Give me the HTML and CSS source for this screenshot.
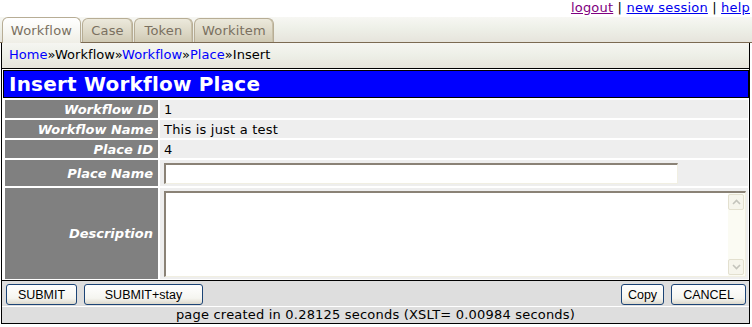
FILE: index.html
```html
<!DOCTYPE html>
<html lang="en">
<head>
	<meta charset="UTF-8">
	<title>Insert Workflow Place</title>
	<link rel="stylesheet" href="styles.css">
</head>
<body>
	<div class="toplinks">
		<a href="#" class="visited">logout</a> | <a href="#">new session</a> | <a href="#">help</a>
	</div>
	<div class="tabbar">
		<ul class="tabs">
			<li class="tab active w1">Workflow</li>
			<li class="tab w2">Case</li>
			<li class="tab w3">Token</li>
			<li class="tab w4">Workitem</li>
		</ul>
	</div>
	<div class="page">
		<div class="crumbs">
			<a href="#">Home</a>»Workflow»<a href="#">Workflow</a>»<a href="#">Place</a>»Insert
		</div>
		<div class="content">
			<h1 class="title">Insert Workflow Place</h1>
			<div class="form-grid">
				<div class="label">Workflow ID</div>
				<div class="value">1</div>
				<div class="label">Workflow Name</div>
				<div class="value">This is just a test</div>
				<div class="label">Place ID</div>
				<div class="value">4</div>
				<div class="label">Place Name</div>
				<div class="value field"><input type="text" class="text-input"></div>
				<div class="label">Description</div>
				<div class="value field">
					<div class="textbox">
						<textarea class="text-area"></textarea>
						<div class="scrollbar">
							<span class="scroll-btn">
								<svg width="9" height="6" viewBox="0 0 9 6"><path d="M1 5 L4.5 1.5 L8 5" fill="none" stroke="#c4c4bc" stroke-width="1.6"/></svg>
							</span>
							<span class="scroll-btn">
								<svg width="9" height="6" viewBox="0 0 9 6"><path d="M1 1 L4.5 4.5 L8 1" fill="none" stroke="#c4c4bc" stroke-width="1.6"/></svg>
							</span>
						</div>
					</div>
				</div>
			</div>
			<div class="actions">
				<button class="btn b-submit">SUBMIT</button>
				<button class="btn b-stay">SUBMIT+stay</button>
				<span class="spacer"></span>
				<button class="btn b-copy">Copy</button>
				<button class="btn b-cancel">CANCEL</button>
			</div>
			<div class="footer">page created in 0.28125 seconds (XSLT= 0.00984 seconds)</div>
		</div>
	</div>
</body>
</html>
```
FILE: styles.css
```css
*{margin: 0;padding: 0;box-sizing: border-box;}
body{
	font-family: "DejaVu Sans", Verdana, sans-serif;
	font-size: 13px;
	letter-spacing: 0.2px;
	color: #000;
	background-color: #fff;
}
li{
	list-style: none;
}
.toplinks{
	height: 17px;
	line-height: 15px;
	text-align: right;
	padding-right: 2px;
}
.toplinks a{
	color: #0000ee;
}
.toplinks a.visited{
	color: #800080;
}
.tabbar{
	height: 26px;
	border-bottom: 1px solid #7b6a52;
	background: linear-gradient(#f7f7f3, #eef0e8 45%, #e6e4dc);
}
.tabs{
	display: flex;
	align-items: flex-end;
	gap: 1px;
	height: 25px;
	padding-left: 2px;
}
.tab{
	height: 24px;
	line-height: 23px;
	text-align: center;
	color: #7a7060;
	border: 1px solid #b7ad95;
	border-bottom: none;
	border-radius: 6px 6px 0 0;
	background: linear-gradient(#ece9dc, #d9d4c1 70%, #cfc9b3);
	box-shadow: inset -1px 0 0 #c8c0a8;
}
.tab.active{
	height: 26px;
	line-height: 26px;
	margin-bottom: -1px;
	background: linear-gradient(#ffffff, #f6f6f1 60%, #efeee6);
	box-shadow: none;
}
.w1{width: 79px;}
.w2{width: 51px;}
.w3{width: 59px;}
.w4{width: 80px;}
.page{
	margin: 0 2px 0 1px;
	border-left: 1px solid #000;
	border-right: 1px solid #000;
}
.crumbs{
	height: 26px;
	line-height: 24px;
	padding-left: 7px;
	letter-spacing: 0.05px;
	border-bottom: 1px solid #000;
	background: linear-gradient(#f5f5f1, #eef0e8 45%, #e6e4dc);
}
.crumbs a{
	color: #0000ff;
	text-decoration: none;
}
.content{
	padding-top: 1px;
}
.title{
	height: 28px;
	margin-left: 1px;
	padding-left: 5px;
	line-height: 26px;
	font-size: 20px;
	font-weight: bold;
	color: #fff;
	background-color: #0000ff;
	border: 1px solid #000;
}
.form-grid{
	display: grid;
	grid-template-columns: 153px 1fr;
	grid-template-rows: 18px 18px 18px 26px 91px;
	gap: 2px;
	margin: 2px 1px 1px 3px;
}
.label{
	display: flex;
	align-items: center;
	justify-content: flex-end;
	padding-right: 5px;
	font-weight: bold;
	font-style: italic;
	letter-spacing: 0;
	color: #fff;
	background-color: #808080;
}
.value{
	display: flex;
	align-items: center;
	padding-left: 4px;
	background-color: #eeeeee;
}
.value.field{
	align-items: flex-start;
	padding-top: 3px;
	padding-right: 2px;
}
.text-input{
	width: 514px;
	height: 21px;
	border-style: solid;
	border-width: 2px 1px 1px 2px;
	border-color: #8a8276 #f1efe2 #f1efe2 #8a8276;
	background-color: #fff;
	font: inherit;
}
.textbox{
	display: flex;
	width: 100%;
	height: 86px;
	border-style: solid;
	border-width: 2px 1px 1px 2px;
	border-color: #8a8276 #f1efe2 #f1efe2 #8a8276;
	background-color: #fff;
}
.text-area{
	flex: 1;
	border: none;
	resize: none;
	outline: none;
	font: inherit;
}
.scrollbar{
	display: flex;
	flex-direction: column;
	justify-content: space-between;
	width: 17px;
	padding: 1px 1px 1px 0;
	background-color: #fbfbf3;
}
.scroll-btn{
	display: flex;
	align-items: center;
	justify-content: center;
	height: 16px;
	border: 1px solid #e3e0cf;
	border-radius: 2px;
	background-color: #f6f5ec;
}
.actions{
	display: flex;
	align-items: flex-start;
	gap: 7px;
	height: 27px;
	padding: 3px 3px 0 4px;
	border-top: 1px solid #000;
	border-bottom: 1px solid #fff;
	background-color: #dedede;
}
.spacer{
	flex: 1;
}
.btn{
	height: 21px;
	font-family: "Liberation Sans", Arial, sans-serif;
	font-size: 12.5px;
	letter-spacing: 0;
	color: #000;
	border: 1px solid #1c4476;
	border-radius: 3px;
	background: linear-gradient(#ffffff, #f5f5f0 70%, #dcd8cc);
}
.b-submit{width: 71px;}
.b-stay{width: 119px;}
.b-copy{width: 43px;}
.b-cancel{width: 75px;}
.footer{
	height: 17px;
	line-height: 16px;
	text-align: center;
	background-color: #dedede;
	border-bottom: 1px solid #000;
}
```
